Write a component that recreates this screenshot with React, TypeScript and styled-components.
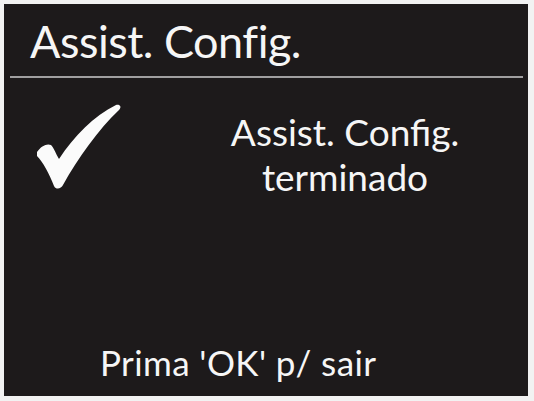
import React from "react";
import styled, { createGlobalStyle } from "styled-components";

const Global = createGlobalStyle`
  html, body { margin: 0; padding: 0; background: #f2f2f2; }
  body { font-family: Lato, "Open Sans", sans-serif; }
`;

const Screen = styled.div`
  margin: 4px 0 0 4px;
  width: 524px;
  height: 392px;
  background: #1d1a1b;
  color: #f6f6f6;
  display: flex;
  flex-direction: column;
  box-sizing: border-box;
`;

const Header = styled.div`
  padding: 9px 0 0 26px;
  height: 63px;
  box-sizing: border-box;
  font-size: 45px;
  line-height: 56px;
  letter-spacing: -0.5px;
`;

const Rule = styled.div`
  height: 2px;
  margin: 9px 5px 0 6px;
  background: #a09fa0;
`;

const Body = styled.div`
  display: flex;
  align-items: flex-start;
  padding: 24px 0 0 30px;
  height: 200px;
  box-sizing: border-box;
`;

const Check = styled.svg`
  width: 90px;
  height: 90px;
  flex: none;
`;

const Message = styled.div`
  flex: 1;
  display: flex;
  flex-direction: column;
  align-items: center;
  padding-top: 7px;
  margin-left: 38px;
`;

const Line = styled.div`
  font-size: 37px;
  line-height: 45px;
  letter-spacing: 0px;
  white-space: nowrap;
`;

const Footer = styled.div`
  margin-top: auto;
  padding: 0 0 12px 96px;
  font-size: 35px;
  line-height: 44px;
  letter-spacing: 0.4px;
`;

export default function App() {
  return (
    <>
      <Global />
      <Screen>
        <Header>Assist. Config.</Header>
        <Rule />
        <Body>
          <Check viewBox="0 0 90 90">
            <path
              d="M3,50 C7,44 13,41 17,43 C20,46 22,52 25,57 C40,34 60,14 82,3 C86,2 88,5 85,8 C64,28 44,56 29,83 C27,87 22,88 20,84 C15,71 9,60 3,54 Z"
              fill="#fbfbfb"
            />
          </Check>
          <Message>
            <Line>Assist. Config.</Line>
            <Line>terminado</Line>
          </Message>
        </Body>
        <Footer>Prima 'OK' p/ sair</Footer>
      </Screen>
    </>
  );
}
